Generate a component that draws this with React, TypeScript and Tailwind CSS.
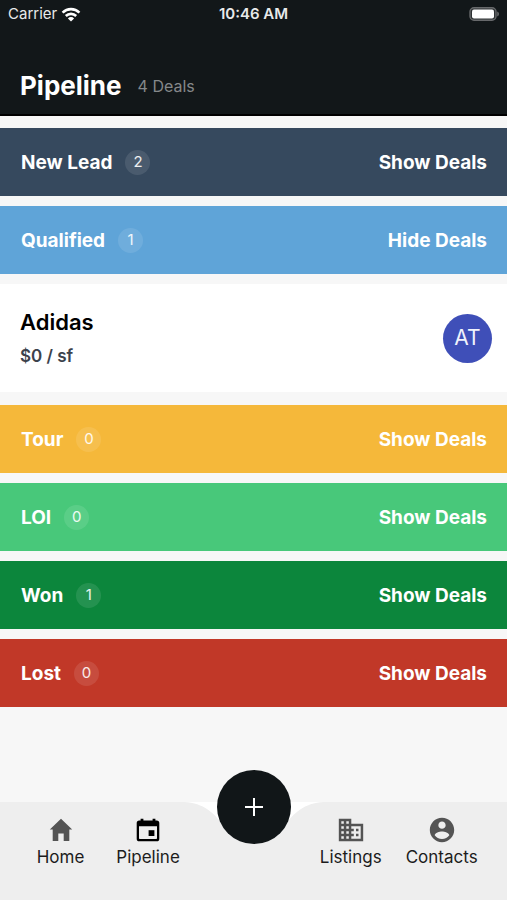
import { useState } from 'react';
import type { ReactNode } from 'react';
import { IoMdBusiness, IoMdContact } from 'react-icons/io';

type Deal = { name: string; price: string; initials: string };

type Stage = {
  name: string;
  count: number;
  color: string;
  deals: Deal[];
};

const STAGES: Stage[] = [
  { name: 'New Lead', count: 2, color: 'bg-[#36495e]', deals: [] },
  {
    name: 'Qualified',
    count: 1,
    color: 'bg-[#5fa4d8]',
    deals: [{ name: 'Adidas', price: '$0 / sf', initials: 'AT' }],
  },
  { name: 'Tour', count: 0, color: 'bg-[#f5b83a]', deals: [] },
  { name: 'LOI', count: 0, color: 'bg-[#48c87a]', deals: [] },
  { name: 'Won', count: 1, color: 'bg-[#0c863c]', deals: [] },
  { name: 'Lost', count: 0, color: 'bg-[#c13828]', deals: [] },
];

function StatusBar() {
  return (
    <div className="grid grid-cols-3 items-center h-7 px-2 text-[15px] text-[#e8eaea]">
      <div className="flex items-center gap-1">
        <span>Carrier</span>
        <svg viewBox="0 0 20 15" className="w-5 h-[15px]" fill="none" stroke="#fff" strokeWidth="2.6">
          <path d="M1.6 5.6a12 12 0 0 1 16.8 0" />
          <path d="M4.8 9a7.4 7.4 0 0 1 10.4 0" />
          <path d="M10 14.6 6.9 11.4a4.4 4.4 0 0 1 6.2 0z" fill="#fff" stroke="none" />
        </svg>
      </div>
      <span className="text-center font-semibold">10:46 AM</span>
      <svg viewBox="0 0 31 15" className="w-[31px] h-[15px] justify-self-end">
        <rect x="2" y="0.8" width="26" height="12.4" rx="4" fill="#2e3234" stroke="#67696b" strokeWidth="1.4" />
        <rect x="4" y="2.4" width="22" height="9.2" rx="2" fill="#fff" />
        <path d="M29.2 4.5v5c1.200-.4 1.800-1.400 1.800-2.500s-.6-2.100-1.800-2.500z" fill="#67696b" />
      </svg>
    </div>
  );
}

function DealCard({ deal }: { deal: Deal }) {
  return (
    <div className="flex items-center justify-between h-[108px] pl-5 pr-[15px] mb-[3px] bg-white">
      <div>
        <h3 className="text-[22px] leading-7 font-semibold text-black">{deal.name}</h3>
        <p className="mt-2 text-[17px] leading-6 font-semibold text-[#3c424c]">{deal.price}</p>
      </div>
      <div className="flex items-center justify-center size-[49px] rounded-full bg-[#3f4fb8] text-[21px] text-[#f0f2fc]">
        {deal.initials}
      </div>
    </div>
  );
}

function StageSection({ stage, open, onToggle }: { stage: Stage; open: boolean; onToggle: () => void }) {
  return (
    <>
      <section className={`flex items-center justify-between h-[68px] pl-[21px] pr-5 text-white ${stage.color}`}>
        <div className="flex items-center gap-[13px]">
          <h2 className="text-[19px] leading-[29px] font-bold">{stage.name}</h2>
          <span className="flex items-center justify-center size-[25px] rounded-full bg-white/10 text-[15px] text-white/90">
            {stage.count}
          </span>
        </div>
        <button onClick={onToggle} className="text-[19px] leading-[29px] font-bold cursor-pointer">
          {open ? 'Hide Deals' : 'Show Deals'}
        </button>
      </section>
      {open && stage.deals.map(deal => <DealCard key={deal.name} deal={deal} />)}
    </>
  );
}

function HomeIcon() {
  return (
    <svg viewBox="0 0 30 30" className="size-[30px]" fill="currentColor">
      <path d="M15 3.8 26.2 14.6H23.3V26H17.7V18.5H12.3V26H6.7V14.6H3.8z" />
    </svg>
  );
}

function CalendarIcon() {
  return (
    <svg viewBox="0 0 30 30" className="size-[30px]" fill="currentColor">
      <path
        fillRule="evenodd"
        d="M7.600 3.800h2.800v1.600h9.200V3.800h2.800v1.600h1.300a2.600 2.600 0 0 1 2.600 2.600v15.700a2.600 2.600 0 0 1-2.600 2.600H6.300a2.600 2.600 0 0 1-2.600-2.600V8a2.600 2.600 0 0 1 2.600-2.600h1.300zM6 11.200v12.100a.7.7 0 0 0 .7.7h16.600a.7.7 0 0 0 .7-.7V11.200z"
      />
      <path d="M15.600 15.200h5.800v5.800h-5.800z" />
    </svg>
  );
}

function Tab({ label, active, children }: { label: string; active?: boolean; children: ReactNode }) {
  return (
    <a href="#" className="flex flex-col items-center text-[17px] leading-6 text-[#1c1c1c]">
      <span className={active ? 'text-black' : 'text-[#545454]'}>{children}</span>
      {label}
    </a>
  );
}

function TabBar() {
  return (
    <nav className="flex h-[98px] bg-[#eeeeee]">
      <div className="flex-1 flex items-start justify-center gap-8 pt-[13px]">
        <Tab label="Home">
          <HomeIcon />
        </Tab>
        <Tab label="Pipeline" active>
          <CalendarIcon />
        </Tab>
      </div>
      <div className="relative w-[74px]">
        {/* Curved shoulders on both sides of the add button */}
        <svg viewBox="0 0 148 40" className="absolute top-0 left-1/2 -translate-x-1/2 w-[148px] max-w-none h-10">
          <path d="M4 0C24 1 34 11 44 24L104 24C114 11 124 1 144 0z" fill="#fff" />
        </svg>
        <button
          aria-label="Add deal"
          className="absolute -top-8 left-0 flex items-center justify-center size-[74px] rounded-full bg-[#111618] cursor-pointer"
        >
          <svg viewBox="0 0 20 20" className="size-5" stroke="#fff" strokeWidth="2">
            <path d="M10 1v18M1 10h18" />
          </svg>
        </button>
      </div>
      <div className="flex-1 flex items-start justify-center gap-6 pt-[13px]">
        <Tab label="Listings">
          <IoMdBusiness size={30} />
        </Tab>
        <Tab label="Contacts">
          <IoMdContact size={30} />
        </Tab>
      </div>
    </nav>
  );
}

export default function App() {
  const [openStage, setOpenStage] = useState<string | null>('Qualified');

  return (
    <div className="flex flex-col min-h-screen bg-[#f7f7f7] font-['Inter',sans-serif]">
      <header className="bg-[#121719] border-b-2 border-black">
        <StatusBar />
        <div className="flex items-center gap-4 h-[86px] px-5 pt-[30px]">
          <h1 className="text-[26px] leading-8 font-bold text-white">Pipeline</h1>
          <span className="text-base text-[#85888a]">4 Deals</span>
        </div>
      </header>

      <main className="flex-1 flex flex-col gap-[10px] pt-3 pb-12">
        {STAGES.map(stage => (
          <StageSection
            key={stage.name}
            stage={stage}
            open={openStage === stage.name}
            onToggle={() => setOpenStage(openStage === stage.name ? null : stage.name)}
          />
        ))}
      </main>

      <TabBar />
    </div>
  );
}
